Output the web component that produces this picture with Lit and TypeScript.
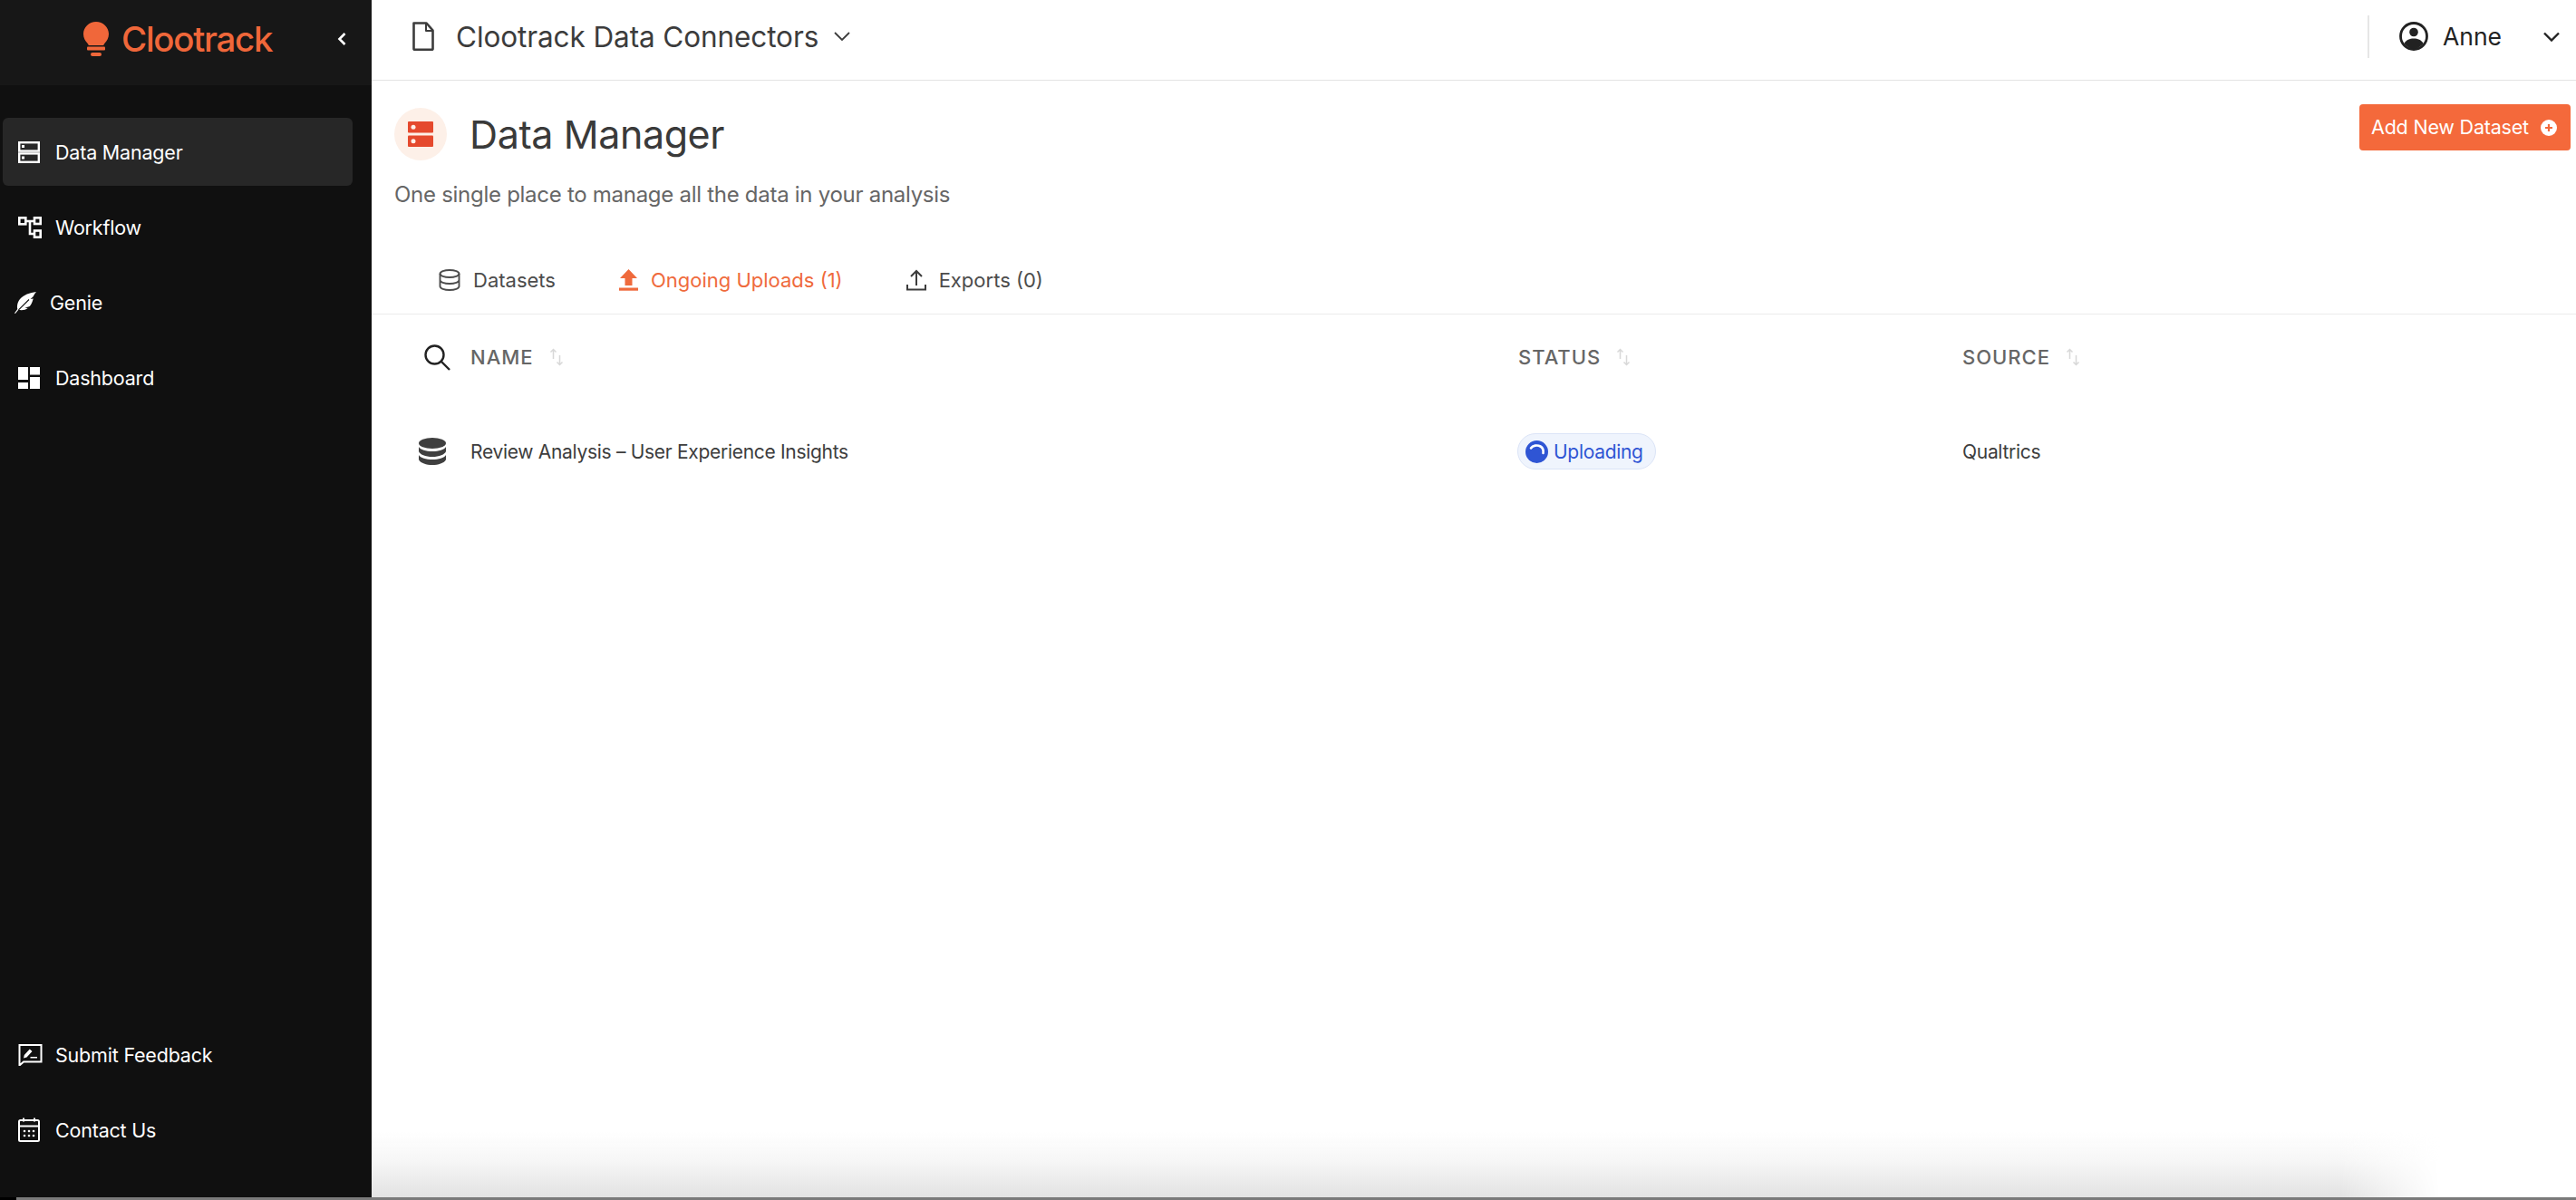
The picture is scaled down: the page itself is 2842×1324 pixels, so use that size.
import { LitElement, html, css, svg } from 'lit';
import { customElement } from 'lit/decorators.js';

const sortIcon = html`<svg class="sort" width="16" height="20" viewBox="0 0 16 20" fill="none" stroke="#d8d8d8" stroke-width="1.5">
  <path d="M4.5 12V1.5M1.5 4.5l3-3 3 3M11.5 8v10.5M8.5 15.5l3 3 3-3" />
</svg>`;

const navIcons = {
  data: svg`<g fill="none" stroke="#fff" stroke-width="2.4"><rect x="1.2" y="1.2" width="21.6" height="9.4"/><rect x="1.2" y="13.4" width="21.6" height="9.4"/></g><g fill="#fff"><rect x="4" y="4" width="3" height="3"/><rect x="4" y="16.500" width="3" height="3"/></g>`,
  flow: svg`<g fill="none" stroke="#fff" stroke-width="2.6"><rect x="1.300" y="1.300" width="7" height="7"/><rect x="18" y="1.300" width="6.700" height="6.700"/><rect x="18" y="15.500" width="6.700" height="7.200"/><path d="M8.300 5H18M13 5v14h5"/></g>`,
  genie: svg`<path fill="#fff" d="M24 0C17 1.200 10 3 5.800 8.200 2.800 12.200 2.600 16.800 3.300 19L0 23.400l.9.600 3.500-4.200c3 1 7.600.5 10.200-1.700l-3.300-.4 5.400-1.600c2-2 3-5 4-8.500l-3.100.5 3.200-3.100C21.500 3.500 22.500 1.700 24 0z"/><path fill="none" stroke="#101010" stroke-width="1.100" d="M4.500 19.800 16 8.500"/>`,
  dash: svg`<g fill="#fff"><rect width="11" height="14"/><rect x="13" width="11" height="8.500"/><rect x="13" y="11" width="11" height="13"/><rect y="17" width="11" height="7"/></g>`,
  feedback: svg`<path fill="none" stroke="#fff" stroke-width="2" d="M1.500 1h24v18.500H6L1.500 23.500z"/><path fill="#fff" d="M6 15.500l.8-3.500 6-6.500 2.700 2.500-6 6.500zM13.500 14h7.500v1.500h-7.500z"/>`,
  contact: svg`<g fill="none" stroke="#fff" stroke-width="2"><rect x="1" y="3" width="22" height="23" rx="1.500"/><path d="M1 9.500h22M6 .5v4M18 .5v4"/></g><g fill="#fff"><circle cx="7" cy="15" r="1.300"/><circle cx="12" cy="15" r="1.300"/><circle cx="17" cy="15" r="1.300"/><circle cx="7" cy="20" r="1.300"/><circle cx="12" cy="20" r="1.300"/><circle cx="17" cy="20" r="1.300"/></g>`,
};

@customElement('app-root')
export class AppRoot extends LitElement {
  static styles = css`
    :host {
      display: block;
      position: relative;
      height: 100vh;
      overflow: hidden;
      background: #fff;
      font-family: Inter, 'Noto Sans', sans-serif;
    }
    .shell {
      display: flex;
      height: 100%;
    }

    /* sidebar */
    .side {
      width: 410px;
      flex: none;
      display: flex;
      flex-direction: column;
      background: #101010;
      color: #fff;
    }
    .brand {
      height: 94px;
      flex: none;
      display: flex;
      align-items: flex-start;
      background: #171717;
      padding: 24px 0 0 92px;
      box-sizing: border-box;
    }
    .brand-name {
      margin: -1px 0 0 14px;
      font-size: 38.5px;
      font-weight: 500;
      line-height: 40px;
      letter-spacing: -1.3px;
      color: #f0673a;
    }
    .collapse {
      margin: 12px 0 0 72px;
    }
    .nav {
      display: flex;
      flex-direction: column;
      gap: 8px;
      margin-top: 36px;
      padding: 0 21px 0 3px;
    }
    .nav.bottom {
      margin-top: auto;
      padding-bottom: 40px;
    }
    .item {
      height: 75px;
      display: flex;
      align-items: center;
      padding-left: 17px;
      border-radius: 6px;
      font-size: 21.5px;
      letter-spacing: -0.2px;
    }
    .item.active {
      background: #272727;
    }
    .item.pull {
      padding-left: 13px;
    }
    .item svg {
      flex: none;
      display: block;
    }
    .item .slot {
      width: 41px;
    }
    .item.pull .slot {
      width: 39px;
    }

    /* top bar */
    .main {
      flex: 1;
      min-width: 0;
      display: flex;
      flex-direction: column;
    }
    .top {
      height: 89px;
      flex: none;
      box-sizing: border-box;
      display: flex;
      align-items: center;
      border-bottom: 1.5px solid #e3e3e3;
      padding: 0 18px 8px 45px;
      color: #3c3c3c;
    }
    .top-title {
      margin-left: 24px;
      font-size: 31.5px;
      letter-spacing: -0.1px;
    }
    .top-chevron {
      margin-left: 17px;
    }
    .divider {
      margin-left: auto;
      width: 2px;
      height: 47px;
      background: #e6e6e6;
    }
    .user {
      margin-left: 33px;
      display: flex;
      align-items: center;
      color: #222;
      font-size: 26.5px;
    }
    .user span {
      margin: 0 46px 0 16px;
    }

    /* page head */
    .head {
      display: flex;
      justify-content: space-between;
      align-items: flex-start;
      padding: 30px 6px 0 25px;
    }
    .title-row {
      display: flex;
      align-items: center;
      gap: 25px;
    }
    .badge {
      width: 58px;
      height: 58px;
      border-radius: 50%;
      background: #fdf0e8;
      display: flex;
      align-items: center;
      justify-content: center;
    }
    h1 {
      margin: 0;
      font-size: 43px;
      font-weight: 400;
      letter-spacing: -0.4px;
      color: #3a3a3a;
    }
    .sub {
      margin: 20px 0 0;
      font-size: 24px;
      line-height: 36px;
      letter-spacing: -0.28px;
      color: #666;
    }
    .add {
      margin-top: -4px;
      height: 51px;
      width: 233px;
      box-sizing: border-box;
      display: flex;
      align-items: center;
      padding: 0 0 2px 13px;
      gap: 13px;
      border-radius: 4px;
      background: #f4693b;
      color: #fff;
      font-size: 21.5px;
      letter-spacing: -0.2px;
    }
    .add svg {
      margin-top: 2px;
    }

    /* tabs */
    .tabs {
      height: 75px;
      margin-top: 39px;
      box-sizing: border-box;
      display: flex;
      align-items: center;
      gap: 70px;
      padding: 0 0 1px 74px;
      border-bottom: 1.5px solid #ececec;
      font-size: 22px;
      color: #4c4c4c;
    }
    .tab {
      display: flex;
      align-items: center;
      gap: 14px;
    }
    .tab.on {
      color: #ef6a3c;
    }

    /* table */
    .row {
      display: grid;
      grid-template-columns: 109px 1156px 490px 1fr;
      align-items: center;
    }
    .row.th {
      height: 94px;
      font-size: 22px;
      font-weight: 500;
      letter-spacing: 1px;
      color: #666;
    }
    .row.td {
      height: 114px;
      font-size: 21px;
      letter-spacing: -0.3px;
      color: #3d3d3d;
    }
    .cell {
      display: flex;
      align-items: center;
      gap: 17px;
    }
    .search {
      padding-left: 58px;
    }
    .db {
      padding-left: 52px;
    }
    .pill {
      height: 40px;
      width: 153px;
      box-sizing: border-box;
      margin-left: -1px;
      display: flex;
      align-items: center;
      gap: 6px;
      padding-left: 8px;
      border: 1px solid #dbe4f7;
      border-radius: 20px;
      background: #eff4fd;
      color: #2f55d4;
    }

    /* screen edge, sits over the page */
    .fade {
      position: absolute;
      left: 410px;
      right: 150px;
      bottom: 3px;
      height: 72px;
      background: linear-gradient(to top, #e2e2e2, #f6f6f6 55%, rgba(255, 255, 255, 0));
      -webkit-mask-image: linear-gradient(to left, transparent, #000 110px);
      mask-image: linear-gradient(to left, transparent, #000 110px);
    }
    .edge {
      position: absolute;
      left: 0;
      right: 0;
      bottom: 0;
      height: 3px;
      background: linear-gradient(to right, #000 18px, #7a7a7a 18px);
    }
  `;

  navItem(label: string, icon: unknown, w: number, h: number, cls = '') {
    return html`<div class="item ${cls}">
      <div class="slot">
        <svg width=${w} height=${h} viewBox="0 0 ${w} ${h}">${icon}</svg>
      </div>
      ${label}
    </div>`;
  }

  render() {
    return html`
      <div class="shell">
        <aside class="side">
          <div class="brand">
            <svg width="28" height="38" viewBox="0 0 28 38" fill="#f0673a">
              <path d="M14 0c7.700 0 14 6 14 13.500 0 4.500-2 7.500-4.300 10-.8.9-1.200 1.500-1.500 2.500H5.800c-.3-1-.7-1.600-1.500-2.500C2 21 0 18 0 13.500 0 6 6.300 0 14 0z" />
              <rect x="4" y="27.500" width="20" height="4" rx="1" />
              <rect x="8" y="34" width="12" height="4" rx="2" />
            </svg>
            <div class="brand-name">Clootrack</div>
            <svg class="collapse" width="10" height="14" viewBox="0 0 10 14" fill="none" stroke="#fff" stroke-width="2.600">
              <path d="M8.500 1 2.500 7l6 6" />
            </svg>
          </div>
          <nav class="nav">
            ${this.navItem('Data Manager', navIcons.data, 24, 24, 'active')}
            ${this.navItem('Workflow', navIcons.flow, 26, 24)}
            ${this.navItem('Genie', navIcons.genie, 24, 24, 'pull')}
            ${this.navItem('Dashboard', navIcons.dash, 24, 24)}
          </nav>
          <nav class="nav bottom">
            ${this.navItem('Submit Feedback', navIcons.feedback, 27, 24)}
            ${this.navItem('Contact Us', navIcons.contact, 24, 27)}
          </nav>
        </aside>

        <main class="main">
          <header class="top">
            <svg width="24" height="32" viewBox="0 0 24 32" fill="none" stroke="#3c3c3c" stroke-width="2.600" stroke-linejoin="round">
              <path d="M1.500 1.500h14l7 8v20.500a.8.800 0 0 1-.8.800H2.300a.8.800 0 0 1-.8-.8z" />
              <path d="M15 1.500v8.500h7.500" stroke-width="2" />
            </svg>
            <div class="top-title">Clootrack Data Connectors</div>
            <svg class="top-chevron" width="18" height="11" viewBox="0 0 18 11" fill="none" stroke="#3c3c3c" stroke-width="1.800">
              <path d="M1 1l8 8 8-8" />
            </svg>
            <div class="divider"></div>
            <div class="user">
              <svg width="32" height="32" viewBox="0 0 32 32">
                <circle cx="16" cy="16" r="14.500" fill="#fff" stroke="#222" stroke-width="2.800" />
                <circle cx="16" cy="11.500" r="4.800" fill="#222" />
                <path fill="#222" d="M5.500 24c2-4 6-5.500 10.500-5.500s8.500 1.500 10.500 5.500c-2.500 3.200-6.300 6-10.500 6s-8-2.800-10.500-6z" />
              </svg>
              <span>Anne</span>
              <svg width="18" height="11" viewBox="0 0 18 11" fill="none" stroke="#222" stroke-width="2.400">
                <path d="M1 1.500l8 8 8-8" />
              </svg>
            </div>
          </header>

          <section class="head">
            <div>
              <div class="title-row">
                <div class="badge">
                  <svg width="28" height="28" viewBox="0 0 28 28">
                    <rect width="28" height="12.500" rx="1" fill="#e5492d" />
                    <rect y="15.500" width="28" height="12.500" rx="1" fill="#e5492d" />
                    <circle cx="6" cy="6.250" r="2.500" fill="#fdf0e8" />
                    <circle cx="6" cy="21.750" r="2.500" fill="#fdf0e8" />
                  </svg>
                </div>
                <h1>Data Manager</h1>
              </div>
              <p class="sub">One single place to manage all the data in your analysis</p>
            </div>
            <div class="add">
              Add New Dataset
              <svg width="18" height="18" viewBox="0 0 18 18">
                <circle cx="9" cy="9" r="9" fill="#fff" />
                <path d="M9 5v8M5 9h8" stroke="#f4693b" stroke-width="2.200" />
              </svg>
            </div>
          </section>

          <div class="tabs">
            <div class="tab">
              <svg width="24" height="24" viewBox="0 0 24 24" fill="none" stroke="#4c4c4c" stroke-width="1.900">
                <ellipse cx="12" cy="5" rx="10.500" ry="4" />
                <path d="M1.500 5v14c0 2.200 4.700 4 10.500 4s10.500-1.800 10.500-4V5M1.500 12c0 2.200 4.700 4 10.500 4s10.500-1.800 10.500-4" />
              </svg>
              Datasets
            </div>
            <div class="tab on">
              <svg width="21" height="24" viewBox="0 0 21 24" fill="#ef6a3c">
                <path d="M10.500 0 20 10h-5.500v8h-8v-8H1z" />
                <rect y="20.500" width="21" height="3.200" />
              </svg>
              Ongoing Uploads (1)
            </div>
            <div class="tab">
              <svg width="22" height="24" viewBox="0 0 22 24" fill="none" stroke="#3c3c3c" stroke-width="2">
                <path d="M11 18V2M5 8l6-6 6 6M1 17v5.500h20V17" />
              </svg>
              Exports (0)
            </div>
          </div>

          <div class="row th">
            <div class="cell search">
              <svg width="29" height="29" viewBox="0 0 29 29" fill="none" stroke="#222" stroke-width="2.400">
                <circle cx="11.500" cy="11.500" r="10" />
                <path d="M18.500 18.500 28 28" />
              </svg>
            </div>
            <div class="cell">NAME ${sortIcon}</div>
            <div class="cell">STATUS ${sortIcon}</div>
            <div class="cell">SOURCE ${sortIcon}</div>
          </div>

          <div class="row td">
            <div class="cell db">
              <svg width="30" height="30" viewBox="0 0 30 30" fill="#3f3f3f">
                <ellipse cx="15" cy="6" rx="15" ry="6" />
                <path d="M0 10c2 3.200 8 5 15 5s13-1.800 15-5v5c-1 3.400-7.500 6-15 6S1 18.400 0 15z" />
                <path d="M0 19c2 3.200 8 5 15 5s13-1.800 15-5v5c-1 3.400-7.500 6-15 6S1 27.400 0 24z" />
              </svg>
            </div>
            <div class="cell">Review Analysis – User Experience Insights</div>
            <div class="cell">
              <div class="pill">
                <svg width="25" height="25" viewBox="0 0 25 25">
                  <circle cx="12.500" cy="12.500" r="12.500" fill="#2f55d4" />
                  <path d="M6 8.500C8 5.500 13 4.500 16.500 6.500c2.500 1.500 3.500 4.500 3 7.500" fill="none" stroke="#fff" stroke-width="2.600" stroke-linecap="round" />
                </svg>
                Uploading
              </div>
            </div>
            <div class="cell">Qualtrics</div>
          </div>
        </main>
      </div>
      <div class="fade"></div>
      <div class="edge"></div>
    `;
  }
}
